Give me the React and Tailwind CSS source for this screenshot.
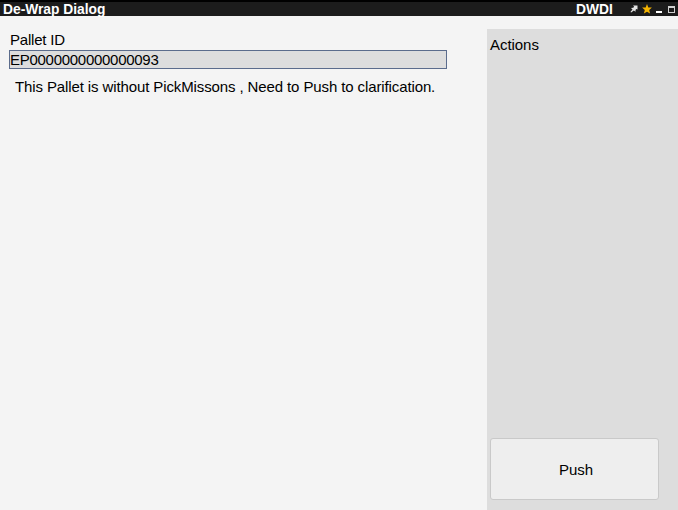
import React from "react";

function PinIcon() {
  return (
    <svg width="8" height="8" viewBox="0 0 8 8" className="block">
      <path d="M3 0.5 L7.5 0.5 L7.5 4.5 L6.3 4 L5.5 4.9 L5.6 6.8 L3.8 5.6 L1.2 7.6 L0.4 7 L2.5 4.4 L1 3 L3.2 2.7 L4.2 1.7 Z" fill="#e4e4e4" />
    </svg>
  );
}

function StarIcon() {
  return (
    <svg width="10" height="10" viewBox="0 0 10 10" className="block">
      <path d="M5 0 L6.3 3.4 L9.9 3.6 L7.2 6 L8.1 9.6 L5 7.7 L1.9 9.6 L2.8 6 L0.1 3.6 L3.7 3.4 Z" fill="#f5b400" />
    </svg>
  );
}

function TitleBar() {
  return (
    <header className="flex h-4 items-start border-t-2 border-black bg-[#1c1c1c] text-[13.8px] leading-[15px] font-bold text-white">
      <h1 className="ml-[3px] flex-1">De-Wrap Dialog</h1>
      <span className="w-[54px]">DWDI</span>
      <span className="mt-[3px] w-3"><PinIcon /></span>
      <span className="mt-[2px] w-[14px]"><StarIcon /></span>
      <span className="mt-[9px] h-[2px] w-[6px] bg-white" />
      <span className="mt-1 mr-[3px] ml-[6px] h-[7px] w-[7px] border border-t-2 border-[#d0d0d0]" />
    </header>
  );
}

export default function App() {
  return (
    <div className="flex h-[510px] w-[678px] flex-col overflow-hidden bg-[#f4f4f4] font-['Liberation_Sans',Arial,sans-serif] text-[15px] leading-[17px] text-black">
      <TitleBar />
      <div className="flex min-h-0 flex-1">
        <main className="w-[487px] pt-[15px] pl-[9px]">
          <label htmlFor="pallet" className="block pl-px tracking-[-0.2px]">Pallet ID</label>
          <input
            id="pallet"
            readOnly
            value="EP0000000000000093"
            className="mt-[2px] block h-[19px] w-[438px] border border-[#5b6c8c] bg-[#dddddd] p-0 leading-[17px] tracking-[-0.28px] outline-none"
          />
          <p className="mt-[9px] pl-[6px] tracking-[-0.112px] whitespace-nowrap">
            This Pallet is without PickMissons , Need to Push to clarification.
          </p>
        </main>
        <aside className="mt-[13px] flex flex-1 flex-col justify-between bg-[#dddddd] pt-[7px] pb-[10px] pl-[3px]">
          <h2 className="tracking-[-0.05px]">Actions</h2>
          <button className="h-[62px] w-[169px] rounded-[3px] border border-[#c9c9c9] bg-[#eeeeee] pt-px pl-[3px]">Push</button>
        </aside>
      </div>
    </div>
  );
}
